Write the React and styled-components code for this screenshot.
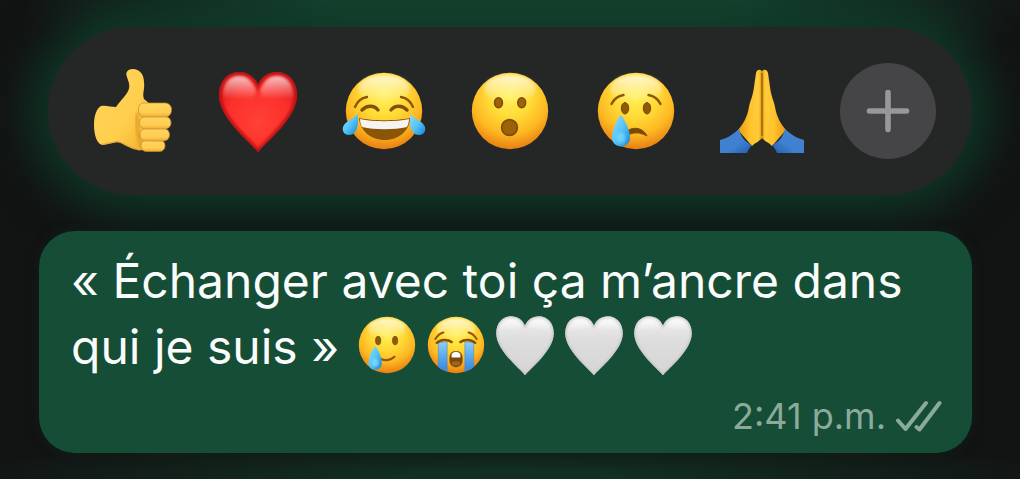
import React from 'react';
import styled, { createGlobalStyle } from 'styled-components';

const GlobalStyle = createGlobalStyle`
    * {
        box-sizing: border-box;
    }

    body {
        margin: 0;
        background: #121313;
        font-family: Inter, Roboto, "Liberation Sans", sans-serif;
    }
`

const Screen = styled.main`
    min-height: 100vh;
    padding: 27px 48px 26px 39px;
    overflow: hidden;
    background:
        radial-gradient(ellipse 50% 110px at 52% 0, #16422f 40%, transparent),
        radial-gradient(ellipse 56% 44px at 50% 100%, #112f22 20%, transparent);
`

const ReactionBar = styled.div`
    height: 168px;
    margin-left: 9px;
    padding: 0 21px;
    display: grid;
    grid-template-columns: repeat(7, 1fr);
    align-items: center;
    justify-items: center;
    border-radius: 84px;
    background: #252726;
    box-shadow: 0 0 48px 16px #0f3a29;
`

const ReactionButton = styled.button`
    padding: 0;
    border: 0;
    background: none;
    cursor: pointer;
`

const MoreButton = styled(ReactionButton)`
    width: 96px;
    height: 96px;
    display: flex;
    align-items: center;
    justify-content: center;
    border-radius: 50%;
    background: #454547;
`

const Picture = styled.svg`
    display: block;
    width: 84px;
    height: 84px;
    overflow: visible;
`

const InlinePicture = styled(Picture)`
    width: 62px;
    height: 62px;
    margin: 0 4px 0 3px;
`

const Bubble = styled.article`
    margin-top: 36px;
    padding: 17px 30px 15px 32px;
    border-radius: 36px;
    background: #154d37;
    color: #fafcfb;
    box-shadow: 0 0 12px #12201a;
`

const Message = styled.p`
    margin: 0;
    font-size: 48px;
    line-height: 66px;
`

const Emojis = styled.span`
    display: inline-flex;
    vertical-align: top;
`

const Meta = styled.footer`
    margin-top: 14px;
    display: flex;
    align-items: center;
    justify-content: flex-end;
    gap: 10px;
    color: #8aab9c;
    font-size: 36px;
    line-height: 44px;
`

const SharedDefs = styled.svg`
    display: block;
    width: 0;
    height: 0;
`

const HEART = 'M42 83C34 73 3 49 3 26C3 12 12 3 23 3C32 3 39 8 42 16C45 8 52 3 61 3C72 3 81 12 81 26C81 49 50 73 42 83Z';

function Defs() {
    return(
        <defs>
            <radialGradient id="face" cx="50%" cy="30%" r="70%">
                <stop offset="0" stopColor="#fff15a" />
                <stop offset="0.4" stopColor="#ffdb36" />
                <stop offset="0.72" stopColor="#fdb822" />
                <stop offset="1" stopColor="#e87f12" />
            </radialGradient>
            <linearGradient id="shine" x1="0" y1="0" x2="0" y2="1">
                <stop offset="0" stopColor="#fff" stopOpacity="0.75" />
                <stop offset="1" stopColor="#fff" stopOpacity="0" />
            </linearGradient>
            <linearGradient id="tear" x1="0" y1="0" x2="1" y2="1">
                <stop offset="0" stopColor="#8fdcff" />
                <stop offset="0.5" stopColor="#55c4f8" />
                <stop offset="1" stopColor="#1683d0" />
            </linearGradient>
            <linearGradient id="stream" x1="0" y1="0" x2="0" y2="1">
                <stop offset="0" stopColor="#8fcdf7" />
                <stop offset="0.5" stopColor="#51a3ee" />
                <stop offset="1" stopColor="#3079dc" />
            </linearGradient>
            <radialGradient id="red" cx="50%" cy="62%" r="62%">
                <stop offset="0" stopColor="#ff4136" />
                <stop offset="0.65" stopColor="#fb302b" />
                <stop offset="1" stopColor="#e01a1b" />
            </radialGradient>
            <linearGradient id="white" x1="0" y1="0" x2="0" y2="1">
                <stop offset="0" stopColor="#f0f0f0" />
                <stop offset="0.4" stopColor="#dddddd" />
                <stop offset="1" stopColor="#d6d5d5" />
            </linearGradient>
            <linearGradient id="skin" x1="0" y1="0" x2="1" y2="1">
                <stop offset="0" stopColor="#ffd45c" />
                <stop offset="0.6" stopColor="#ffce4c" />
                <stop offset="1" stopColor="#f0ae2c" />
            </linearGradient>
            <linearGradient id="finger" x1="0" y1="0" x2="0" y2="1">
                <stop offset="0" stopColor="#ffd660" />
                <stop offset="0.7" stopColor="#ffcc50" />
                <stop offset="1" stopColor="#eaaa38" />
            </linearGradient>
            <linearGradient id="palm" x1="0" y1="0" x2="1" y2="0">
                <stop offset="0" stopColor="#e99a10" />
                <stop offset="0.5" stopColor="#ffc32d" />
                <stop offset="0.85" stopColor="#ffc936" />
                <stop offset="1" stopColor="#d88d0c" />
            </linearGradient>
            <linearGradient id="sleeve" x1="0" y1="0" x2="1" y2="1">
                <stop offset="0" stopColor="#4482cc" />
                <stop offset="0.6" stopColor="#3f80d2" />
                <stop offset="1" stopColor="#215ba9" />
            </linearGradient>
            <filter id="soft" x="-20%" y="-20%" width="140%" height="140%">
                <feGaussianBlur stdDeviation="1.6" />
            </filter>
            <clipPath id="heartClip">
                <path d={HEART} />
            </clipPath>
            <clipPath id="faceClip">
                <circle cx="42" cy="42" r="38.2" />
            </clipPath>
        </defs>
    )
}

function Face({ children }) {
    return(
        <>
            <circle cx="42" cy="42" r="38.2" fill="url(#face)" />
            <ellipse cx="42" cy="20" rx="26" ry="14" fill="url(#shine)" filter="url(#soft)" />
            {children}
        </>
    )
}

function ThumbsUp() {
    return(
        <>
            <path d="M11 37C16 36 21 38 26 38C29 33 34 29 37 24C41 18 39 14 37 8C35 3 38 0 43 0C49 0 54 5 54 13C55 20 52 25 54 30L60 35L61 79C55 83 45 81 39 78C34 76 31 73 27 73L13 76C7 76 4 66 4 56C4 46 7 39 11 37Z" fill="url(#skin)" />
            <path d="M48 44C45 54 48 67 52 79" stroke="#d99324" strokeWidth="4" fill="none" opacity="0.65" filter="url(#soft)" />
            <path d="M12 75.5L27 72.5C34 73 36 79 50 81" stroke="#e5a42e" strokeWidth="1.5" fill="none" opacity="0.7" />
            <g fill="url(#finger)" stroke="#c88a25" strokeWidth="0.7">
                <rect x="51" y="71" width="24" height="11.5" rx="5.5" />
                <rect x="50" y="59.5" width="29.5" height="12.5" rx="6" />
                <rect x="49.5" y="47.5" width="31.5" height="12.5" rx="6" />
                <path d="M54 34H75C79 34 81.5 37 81.5 40.5C81.5 45 79 48 75 48H55C51 48 48.5 45 48.5 41C48.5 37 50 34 54 34Z" />
            </g>
        </>
    )
}

function RedHeart() {
    return(
        <>
            <path d={HEART} fill="url(#red)" />
            <g clipPath="url(#heartClip)">
                <path d={HEART} fill="none" stroke="#b8080c" strokeWidth="4.5" filter="url(#soft)" />
                <g fill="url(#shine)" filter="url(#soft)">
                    <path d="M7 29C6 15 13 7 23 7C31 7 35 11 40 21L38 30Z" />
                    <path d="M77 29C78 15 71 7 61 7C53 7 49 11 44 21L46 30Z" />
                </g>
            </g>
        </>
    )
}

function WhiteHeart() {
    return(
        <>
            <path d={HEART} fill="url(#white)" />
            <g clipPath="url(#heartClip)">
                <path d={HEART} fill="none" stroke="#c4c4c4" strokeWidth="3" filter="url(#soft)" />
                <g fill="url(#shine)" filter="url(#soft)">
                    <path d="M8 23C8 13 14 7 23 7C31 7 35 11 38 18Z" />
                    <path d="M76 23C76 13 70 7 61 7C53 7 49 11 46 18Z" />
                </g>
            </g>
        </>
    )
}

function Joy() {
    return(
        <Face>
            <path d="M13 38C15 33 19 29 25 28M71 38C69 33 65 29 59 28" stroke="#8f5605" strokeWidth="2.4" strokeLinecap="round" fill="none" />
            <path d="M20 41C25 36 32 36 36 41M49 41C53 36 60 36 65 41" stroke="#82500a" strokeWidth="3.4" strokeLinecap="round" fill="none" />
            <path d="M17 49C30 52 55 52 68 49C68 62 56 71 43 71C29 71 18 62 17 49Z" fill="#8b5508" />
            <path d="M18 50C31 53 54 53 67 50C67 53 66 56 65 58C52 61 33 61 20 58C19 56 18 53 18 50Z" fill="#f6f4f2" />
            <path d="M15.5 45C17 53 16 66 7 66C2 66 0 62 1 58C3 52 11 51 15.5 45Z" fill="url(#tear)" />
            <path d="M68.5 45C67 53 68 66 77 66C82 66 84 62 83 58C81 52 73 51 68.5 45Z" fill="url(#tear)" />
        </Face>
    )
}

function Wow() {
    return(
        <Face>
            <g fill="#9c6205" stroke="#7b4c0d" strokeWidth="1.6">
                <ellipse cx="30.5" cy="33.7" rx="3.9" ry="5" />
                <ellipse cx="53.7" cy="33.7" rx="3.9" ry="5" />
                <circle cx="41.5" cy="58.5" r="7.9" />
            </g>
        </Face>
    )
}

function Cry() {
    return(
        <Face>
            <path d="M17.5 35C20 30 24 27 29.5 26M54.5 26C60 27 64 30 66.5 35" stroke="#8f5605" strokeWidth="2.4" strokeLinecap="round" fill="none" />
            <g fill="#8f5907" stroke="#744609" strokeWidth="1">
                <ellipse cx="31" cy="39.3" rx="3.7" ry="5.7" />
                <ellipse cx="53" cy="39.3" rx="3.7" ry="5.7" />
            </g>
            <path d="M32 63C37 58 48 57 53 67C46 63 40 63 34 66Z" fill="#784a08" stroke="#784a08" strokeWidth="1" strokeLinejoin="round" />
            <path d="M26.7 46.5C28.5 46.5 36 60 36 68.500C36 74 32 77.5 27 77.5C22 77.5 18 74 18 68.500C18 60 25 46.5 26.7 46.5Z" fill="url(#tear)" />
            <ellipse cx="27" cy="69" rx="4.5" ry="5.5" fill="#7fdcff" opacity="0.7" filter="url(#soft)" />
        </Face>
    )
}

function Pray() {
    const hand = 'M42.5 3C41 0 37 0 36 4L34 18C33 27 30 32 29 38C27 49 23 55 18 61L32 77C36 73 42.5 71 42.5 67Z';
    return(
        <>
            {[undefined, 'translate(84 0) scale(-1 1)'].map((flip, i) => (
                <g key={i} transform={flip}>
                    <path d={hand} fill="url(#palm)" />
                    <path d="M39 5C37 22 37 40 35 50" stroke="#ffd751" strokeWidth="2" fill="none" opacity="0.6" filter="url(#soft)" />
                    <path d="M0 71C9 69 14 64 19 60C21 68 25 73 32 76C30 78 28 81 27 84H0Z" fill="url(#sleeve)" />
                </g>
            ))}
            <path d="M42 4V67" stroke="#9b6207" strokeWidth="1.4" />
        </>
    )
}

function HappyTear() {
    return(
        <Face>
            <g fill="#8f5907" stroke="#744609" strokeWidth="1">
                <ellipse cx="30" cy="36" rx="3.5" ry="5.7" />
                <ellipse cx="53" cy="36" rx="3.5" ry="5.7" />
            </g>
            <path d="M34 61C40 64 48 62 52 58" stroke="#8f5605" strokeWidth="3" strokeLinecap="round" fill="none" />
            <path d="M26 44C28 44 35 57 35 66C35 72 31 75.500 26 75.500C21 75.500 17 72 17 66C17 57 24 44 26 44Z" fill="url(#tear)" />
            <ellipse cx="26" cy="66" rx="4.5" ry="5.5" fill="#8be2ff" opacity="0.7" filter="url(#soft)" />
        </Face>
    )
}

function Sob() {
    return(
        <Face>
            <g clipPath="url(#faceClip)">
                <path d="M18 38H30V84H18ZM54 38H66V84H54Z" fill="url(#stream)" stroke="#397bc0" strokeWidth="0.6" />
            </g>
            <path d="M14 34C17 29 20 26 25 25M70 34C67 29 64 26 59 25" stroke="#8f5605" strokeWidth="2.6" strokeLinecap="round" fill="none" />
            <path d="M16 39C21 34 31 34 36 38M68 39C63 34 53 34 48 38" stroke="#82500a" strokeWidth="3.4" strokeLinecap="round" fill="none" />
            <path d="M42 50C50 50 51 56 51 62C51 68 48 72 42 72C36 72 33 68 33 62C33 56 34 50 42 50Z" fill="#7d4808" />
            <path d="M36 55C38 50 46 50 48 55V59H36Z" fill="#fff" />
            <ellipse cx="42" cy="67" rx="6" ry="3" fill="#9b6520" />
        </Face>
    )
}

const reactions = [
    { label: 'Pouce levé', Drawing: ThumbsUp },
    { label: 'Cœur rouge', Drawing: RedHeart },
    { label: 'Larmes de joie', Drawing: Joy },
    { label: 'Surpris', Drawing: Wow },
    { label: 'Triste', Drawing: Cry },
    { label: 'Mains jointes', Drawing: Pray },
];

const messageEmojis = [HappyTear, Sob, WhiteHeart, WhiteHeart, WhiteHeart];

function App() {
    return(
        <Screen>
            <GlobalStyle />
            <SharedDefs aria-hidden="true"><Defs /></SharedDefs>
            <ReactionBar role="toolbar" aria-label="Réactions">
                {reactions.map(({ label, Drawing }) => (
                    <ReactionButton key={label} type="button" aria-label={label}>
                        <Picture viewBox="0 0 84 84" aria-hidden="true"><Drawing /></Picture>
                    </ReactionButton>
                ))}
                <MoreButton type="button" aria-label="Plus de réactions">
                    <svg width="44" height="44" viewBox="0 0 44 44" aria-hidden="true">
                        <path d="M22 3.5V40.5M3.5 22H40.5" stroke="#98989a" strokeWidth="5.6" strokeLinecap="round" />
                    </svg>
                </MoreButton>
            </ReactionBar>
            <Bubble>
                <Message>
                    « Échanger avec toi ça m’ancre dans qui je suis »{' '}
                    <Emojis>
                        {messageEmojis.map((Drawing, i) => (
                            <InlinePicture key={i} viewBox="0 0 84 84" aria-hidden="true"><Drawing /></InlinePicture>
                        ))}
                    </Emojis>
                </Message>
                <Meta>
                    <time dateTime="14:41">2:41 p.m.</time>
                    <svg width="46" height="32" viewBox="0 0 46 32" fill="none" stroke="currentColor" strokeWidth="4" strokeLinecap="round" strokeLinejoin="round" role="img" aria-label="Lu">
                        <path d="M2 20.5L9.5 29L30 3M20.5 27L23.5 29.5L43.5 3" />
                    </svg>
                </Meta>
            </Bubble>
        </Screen>
    )
}

export default App;
